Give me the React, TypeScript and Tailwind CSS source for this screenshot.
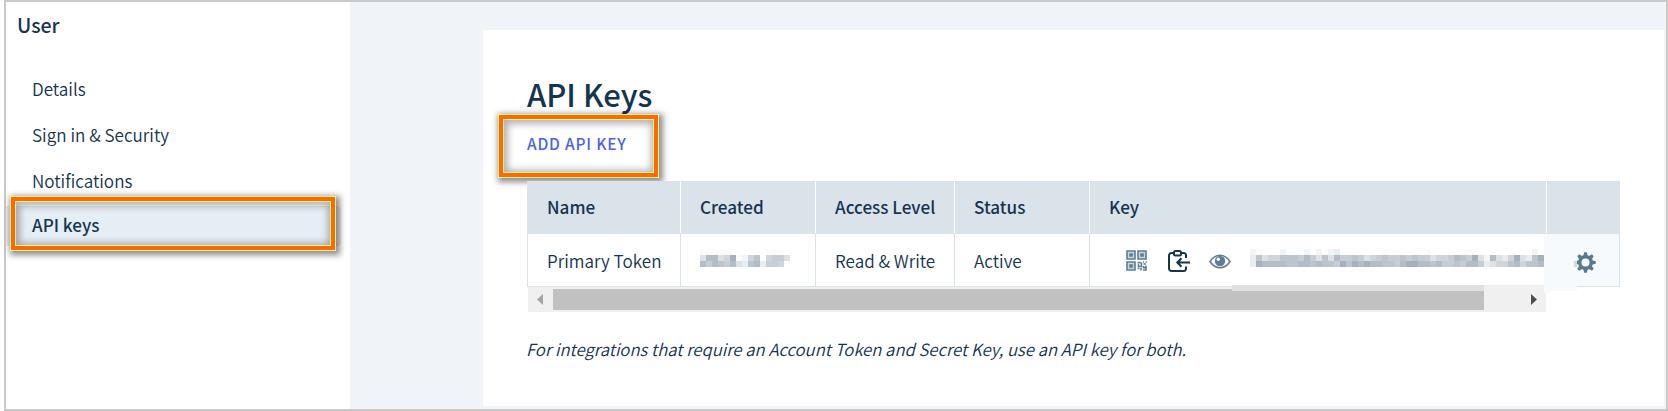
import React from "react";

const palette: Record<string, string> = {
  a: "#fbfbfc",
  b: "#f3f4f6",
  c: "#e9edf1",
  d: "#dce1e5",
  e: "#cfd5dc",
  f: "#c6cdd6",
  g: "#bcc5ce",
  h: "#b2bdc7",
  i: "#a5b1bc",
};

function Mosaic({ rows, className }: { rows: string[]; className?: string }) {
  const w = Math.max(...rows.map((r) => r.length)) * 6;
  return (
    <svg width={w} height={rows.length * 6} className={className} shapeRendering="crispEdges" aria-hidden="true">
      {rows.flatMap((row, y) =>
        [...row].map((c, x) =>
          palette[c] ? <rect key={`${x}-${y}`} x={x * 6} y={y * 6} width={6} height={6} fill={palette[c]} /> : null
        )
      )}
    </svg>
  );
}

const dateRows = ["aaaaaa.....aaa.", "dhhdeiabeg.effd", "hfhgfhdcghcffe."];
const keyRows = [
  "ba...b...b.b.bc.......aaa....a.....aaa.........b....",
  "cgdeegggfhfdgdhffgfdefgffgfgffdeefhgfidbhdceidcgifed",
  "cihhhhgghhghggfigihihhggfhiihhghffgfhhfcdeeghegghhhg",
];

function QrIcon() {
  return (
    <svg width="21" height="21" viewBox="0 0 21 21" fill="none" stroke="#5e7d92" aria-hidden="true">
      <path d="M1 1h8v8H1zM12 1h8v8h-8zM1 12h8v8H1z" fill="#c9d4db" strokeWidth="1.600" />
      <path d="M3.300 3.300h3.500v3.500H3.300zM14.300 3.300h3.500v3.500h-3.500zM3.300 14.300h3.500v3.500H3.300z" fill="#5e7d92" stroke="none" />
      <path
        d="M11.500 12.600h3.200M17 12h1M19.600 12h1.200M12.500 14v2.500h3v-4M17.500 14h2.500M11.500 18.500h2M15 18v2.500M17.500 16v1.600h3M17 20h3.800M20 15.500v5"
        strokeWidth="1.600"
      />
    </svg>
  );
}

function ClipboardIcon() {
  return (
    <svg width="22" height="22" viewBox="0 0 22 22" fill="none" stroke="#15344f" strokeWidth="2" aria-hidden="true">
      <path d="M6 3H3.500A2.500 2.500 0 0 0 1 5.500V18.500A2.500 2.500 0 0 0 3.500 21H15.500A2.300 2.300 0 0 0 18 18.700V16.500" />
      <path d="M13 3h2.500A2.300 2.300 0 0 1 18 5.300V8" />
      <rect x="6" y="1" width="7" height="4.500" rx="1.500" />
      <path d="M22 12.500H9.500M13.500 8.300l-4.200 4.200 4.200 4.200" />
    </svg>
  );
}

function EyeIcon() {
  return (
    <svg width="22" height="15" viewBox="0 0 22 15" fill="none" aria-hidden="true">
      <path d="M1 7.500C4 3 7.500 1.200 11 1.200S18 3 21 7.500C18 12 14.500 13.800 11 13.800S4 12 1 7.500Z" stroke="#5e7d92" strokeWidth="1.600" />
      <circle cx="11" cy="7" r="5.200" fill="#5e7d92" />
      <circle cx="9.300" cy="5.200" r="1.700" fill="#fff" />
    </svg>
  );
}

function GearIcon() {
  return (
    <svg width="21" height="21" viewBox="-10.500 -10.500 21 21" aria-hidden="true">
      <g fill="#5b798e">
        {[0, 45, 90, 135].map((r) => (
          <path key={r} d="M-1.300-10.300h2.600l.8 3.300v14l-.8 3.300h-2.600l-.8-3.300v-14z" transform={`rotate(${r})`} />
        ))}
        <circle r="7.500" />
      </g>
      <circle r="4" fill="#f6fafd" />
    </svg>
  );
}

function Highlight({ className }: { className: string }) {
  return (
    <div className={`pointer-events-none absolute border border-[#fcf88c] shadow-[2px_2px_6px_2px_rgba(0,0,0,0.45)] ${className}`}>
      <div className="h-full w-full border-4 border-[#ff6900]">
        <div className="h-full w-full border border-[#fcf88c] shadow-[inset_1px_1px_7px_3px_rgba(0,0,0,0.3)]" />
      </div>
    </div>
  );
}

const head = "flex h-[52px] items-center border-r border-white pl-[19px] font-medium";
const cell = "flex h-[52px] items-center border-r border-[#dbe3ea] pl-[19px]";

export default function App() {
  return (
    <div className="h-[411px] w-[1668px] overflow-hidden bg-white pl-1 font-['Noto_Sans_CJK_SC',sans-serif] text-[17.100px] font-[350] text-[#15344f]">
      <div className="flex h-full border-2 border-[#c9c9c9] bg-[#f0f4f9]">
        <aside className="w-[344px] shrink-0 bg-white">
          <h2 className="h-[39px] pt-[9px] pl-[11px] text-[19.500px] leading-[28px] font-medium">User</h2>
          <nav className="mt-6 leading-[47px]">
            <div className="h-[46px] pl-[26px]">Details</div>
            <div className="h-[46px] pl-[26px]">Sign in &amp; Security</div>
            <div className="h-[46px] pl-[26px]">Notifications</div>
            <div className="relative mt-[3px] mr-[9px] h-10 rounded-r bg-[#e5edf5] pl-[26px] leading-[38px] font-medium">
              <Highlight className="-top-[10px] left-1 h-[55px] w-[326px]" />
              <span className="relative">API keys</span>
            </div>
          </nav>
        </aside>
        <main className="mt-7 ml-[133px] h-[376px] w-[1181px] bg-white pl-11">
          <h1 className="h-[88px] pt-[42px] text-[31px] leading-[44px] font-medium">API Keys</h1>
          <div className="relative flex h-[63px] items-center pb-[11px]">
            <Highlight className="-top-1 -left-[29px] h-16 w-[161px]" />
            <a className="relative text-[15.500px] font-medium tracking-[0.8px] text-[#4b63e6]">ADD API KEY</a>
          </div>
          <div className="relative w-[1093px]">
            <div className="grid grid-cols-[154px_135px_139px_135px_457px_73px] bg-[#dbe3ea] pb-px">
              <div className={`${head} pl-5!`}>Name</div>
              <div className={head}>Created</div>
              <div className={head}>Access Level</div>
              <div className={head}>Status</div>
              <div className={head}>Key</div>
              <div />
            </div>
            <div className="grid grid-cols-[154px_135px_139px_135px_457px_73px] border-b border-[#dbe3ea]">
              <div className={`${cell} border-l pt-px`}>Primary Token</div>
              <div className={cell}>
                <Mosaic rows={dateRows} className="-mt-1" />
              </div>
              <div className={`${cell} pt-px`}>Read &amp; Write</div>
              <div className={`${cell} pt-px`}>Active</div>
              <div className="flex h-[52px] items-center overflow-hidden">
                <div className="ml-[36px] pt-px">
                  <QrIcon />
                </div>
                <div className="ml-[21px] pt-[2px]">
                  <ClipboardIcon />
                </div>
                <div className="ml-[19px] pt-[2px]">
                  <EyeIcon />
                </div>
                <Mosaic rows={keyRows} className="-mt-1 ml-[19px] shrink-0" />
              </div>
              <div className="flex h-[52px] items-center border-r border-[#dbe3ea] bg-[#f6fafd] pt-1 pl-[28px]">
                <GearIcon />
              </div>
            </div>
            <div className="ml-px flex h-[25px] w-[1018px] items-center justify-between bg-[#f0f0f0]">
              <svg width="25" height="25" aria-hidden="true">
                <path d="M15 7v11L9 12.500z" fill="#a3a3a3" />
              </svg>
              <div className="h-[21px] w-[931px] bg-[#c1c1c1]" />
              <svg width="62" height="25" aria-hidden="true">
                <path d="M47 7v11l6-5.500z" fill="#4f4f4f" />
              </svg>
            </div>
            <svg width="345" height="56" className="absolute top-[56px] left-[705px]" shapeRendering="crispEdges" aria-hidden="true">
              <path d="M0 48h252v6H0z" fill="#dfe0e0" />
              <path d="M252 48h60v6h-60z" fill="#f0f0f0" />
              <path d="M312 0h6v56h-6zM312 48h33v6h-33z" fill="#f7f9fc" />
              <path d="M342 24h3v6h-3z" fill="#cddbe5" />
            </svg>
          </div>
          <p className="mt-[23px] -ml-px text-[16.700px] leading-7 italic">
            For integrations that require an Account Token and Secret Key, use an API key for both.
          </p>
        </main>
      </div>
    </div>
  );
}
